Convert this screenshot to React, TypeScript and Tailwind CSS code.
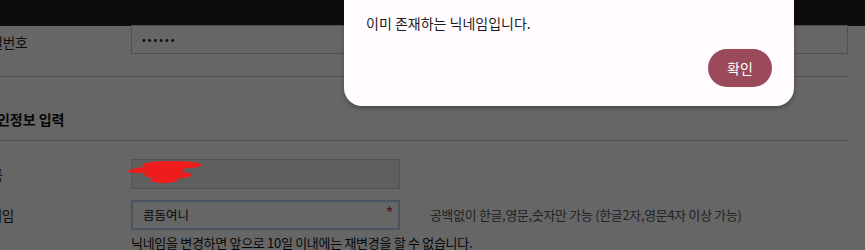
import React from "react";

const kr = { fontFamily: '"Noto Sans CJK KR", "Noto Sans", sans-serif' };

const App = () => {
  return (
    <div className="relative h-[250px] w-[865px] overflow-hidden bg-white" style={kr}>
      {/* page underneath */}
      <div className="h-[26px] bg-[#222]" />
      <div className="ml-[-24px] w-[872px] text-[#222]">
        <div className="flex h-[32px] items-center">
          <div className="w-[155px] pl-[2px] text-[13.5px]">비밀번호</div>
          <div className="flex h-[29px] w-[717px] -translate-y-[3px] items-center border border-[#c8c8c8] px-[10px] text-[11px] tracking-[2px]">
            ••••••
          </div>
        </div>
        <div className="mt-[18px] border-t border-[#cfcfcf]" />
        <div className="ml-[8px] pt-[32px] pb-[10px] text-[14px] font-bold text-[#111]">개인정보 입력</div>
        <div className="border-t border-[#cfcfcf]" />
        <div className="flex items-center pt-[18px]">
          <div className="w-[155px] pl-[2px] text-[13.5px]">이름</div>
          <div className="h-[30px] w-[269px] border border-[#d0d0d0] bg-[#eeeeee]" />
        </div>
        <div className="flex items-center pt-[11px]">
          <div className="w-[155px] pl-[1px] text-[13.5px]">닉네임</div>
          <div className="relative flex h-[30px] w-[269px] items-center border-2 border-[#b9d2f2] px-[10px] text-[12.5px] text-[#111]">
            콤돔여니
            <span className="absolute right-[4px] top-[-3px] text-[18px] text-[#e03a5a]">*</span>
          </div>
          <div className="ml-[30px] text-[12.8px] tracking-[-0.2px] text-[#555]">
            공백없이 한글,영문,숫자만 가능 (한글2자,영문4자 이상 가능)
          </div>
        </div>
        <div className="ml-[155px] pt-[3px] text-[13px] tracking-[-0.3px] text-[#111]">
          닉네임을 변경하면 앞으로 10일 이내에는 재변경을 할 수 없습니다.
        </div>
      </div>

      {/* overlay */}
      <div className="absolute inset-0 bg-black/60" />

      {/* red scribble hiding the name (annotation on top) */}
      <svg className="absolute left-[126px] top-[158px]" width="84" height="30" viewBox="0 0 84 30">
        <g fill="#ee1c1c">
          <ellipse cx="46" cy="7" rx="30" ry="4" />
          <ellipse cx="32" cy="12" rx="26" ry="3.5" />
          <ellipse cx="42" cy="17" rx="24" ry="4" />
          <ellipse cx="38" cy="22" rx="14" ry="3" />
          <ellipse cx="12" cy="13" rx="10" ry="2" />
        </g>
      </svg>

      {/* dialog */}
      <div className="absolute left-[344px] top-[-40px] w-[450px] rounded-[18px] bg-[#fffbfe] px-[22px] pb-[19px] pt-[53px] shadow-[0_2px_4px_rgba(0,0,0,0.3)]">
        <div className="text-[14px] text-[#1d1b20]">이미 존재하는 닉네임입니다.</div>
        <div className="mt-[15px] flex justify-end">
          <button className="h-[38px] w-[64px] rounded-full bg-[#9b4a5c] text-[14px] text-white">확인</button>
        </div>
      </div>
    </div>
  );
};

export default App;
